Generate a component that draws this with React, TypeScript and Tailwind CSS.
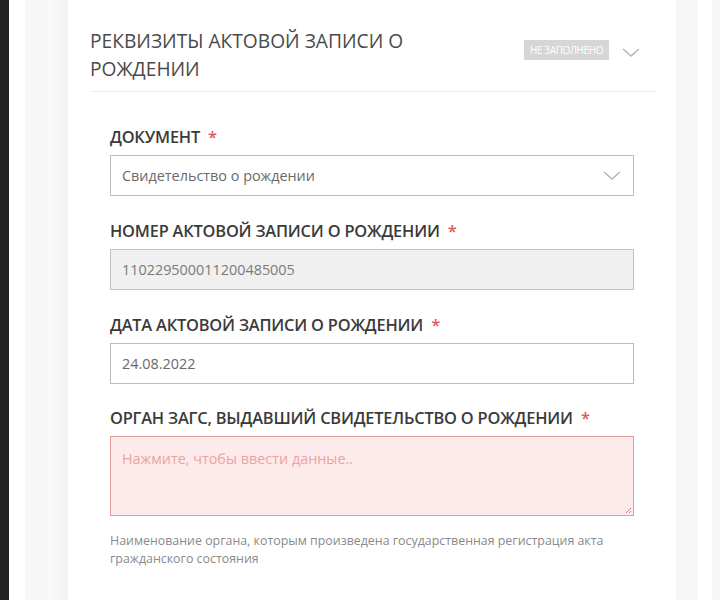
import React from 'react';

const font = { fontFamily: '"Open Sans", "Noto Sans", sans-serif' };

function Chevron({ className }: { className?: string }) {
  return (
    <svg className={className} width="18" height="10" viewBox="0 0 18 10" fill="none">
      <path d="M1 1l8 7 8-7" stroke="#b5b5b5" strokeWidth="1.5" />
    </svg>
  );
}

function Label({ children }: { children: React.ReactNode }) {
  return (
    <div className="flex items-center h-[24px] text-[16.4px] font-semibold text-[#3a3a3a] tracking-[-0.2px]">
      <span>{children}</span>
      <span className="ml-[8px] text-[#e05a5a]">*</span>
    </div>
  );
}

export default function App() {
  return (
    <div className="flex w-[720px] h-[600px] overflow-hidden bg-white" style={font}>
      <div className="w-[9px] shrink-0 bg-[#222]" />
      <div className="w-[16px] shrink-0 bg-white" />
      <div className="w-[22px] shrink-0 bg-[#f7f7f7]" />
      <div className="w-[21px] shrink-0 bg-gradient-to-r from-[#fafafa] to-[#f2f2f2]" />

      <div className="w-[608px] shrink-0 bg-white pl-[22px] pr-[20px]">
        <div className="flex items-start pt-[27px] pb-[8px] border-b border-[#ececec]">
          <h2 className="w-[330px] text-[19.2px] leading-[28px] font-normal text-[#4a4a4a]">
            РЕКВИЗИТЫ АКТОВОЙ ЗАПИСИ О РОЖДЕНИИ
          </h2>
          <div className="ml-auto mt-[13px] flex items-center">
            <span className="h-[20px] w-[85px] flex items-center justify-center bg-[#d6d6d6] text-[10px] text-white tracking-[-0.4px]">
              НЕ ЗАПОЛНЕНО
            </span>
            <Chevron className="ml-[13px] mt-[6px] mr-[16px]" />
          </div>
        </div>

        <div className="pl-[20px] pr-[22px] pt-[33px]">
          <Label>ДОКУМЕНТ</Label>
          <div className="mt-[6px] h-[41px] border border-[#bdbdbd] flex items-center pl-[11px] pr-[12px] text-[14.4px] text-[#6a6a6a]">
            <span>Свидетельство о рождении</span>
            <Chevron className="ml-auto" />
          </div>

          <div className="mt-[23px]">
            <Label>НОМЕР АКТОВОЙ ЗАПИСИ О РОЖДЕНИИ</Label>
          </div>
          <div className="mt-[6px] h-[41px] border border-[#c2c2c2] bg-[#f0f0f0] flex items-center pl-[11px] text-[14.4px] text-[#7a7a7a]">
            110229500011200485005
          </div>

          <div className="mt-[23px]">
            <Label>ДАТА АКТОВОЙ ЗАПИСИ О РОЖДЕНИИ</Label>
          </div>
          <div className="mt-[6px] h-[41px] border border-[#bdbdbd] flex items-center pl-[11px] text-[14.4px] text-[#6a6a6a]">
            24.08.2022
          </div>

          <div className="mt-[22px]">
            <Label>ОРГАН ЗАГС, ВЫДАВШИЙ СВИДЕТЕЛЬСТВО О РОЖДЕНИИ</Label>
          </div>
          <div className="relative mt-[6px] h-[80px] border border-[#e59a9a] bg-[#fdeaea] pl-[11px] pt-[11px] text-[14.4px] text-[#eba3a3]">
            Нажмите, чтобы ввести данные..
            <svg className="absolute right-[1px] bottom-[1px]" width="7" height="7" viewBox="0 0 7 7">
              <path d="M6 1L1 6M6 4L4 6" stroke="#c88" strokeWidth="1" />
            </svg>
          </div>

          <p className="mt-[16px] text-[12.4px] leading-[18px] text-[#8a8a8a]">
            Наименование органа, которым произведена государственная регистрация акта гражданского состояния
          </p>
        </div>
      </div>

      <div className="w-[22px] shrink-0 bg-[#f7f7f7]" />
      <div className="w-[14px] shrink-0 bg-white" />
      <div className="w-[8px] shrink-0 bg-[#f7f7f7]" />
    </div>
  );
}
